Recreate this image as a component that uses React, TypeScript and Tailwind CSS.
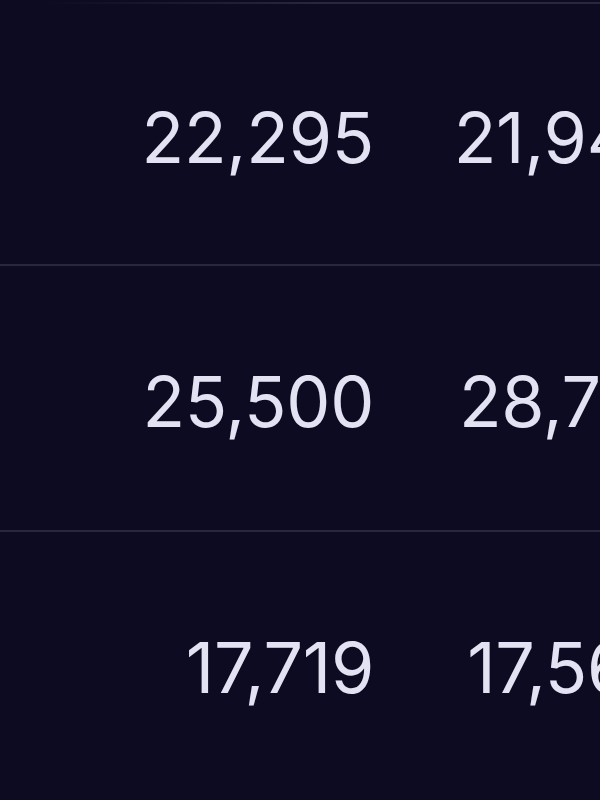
import React from 'react';

const rows = [
  { a: '22,295', b: '21,942' },
  { a: '25,500', b: '28,714' },
  { a: '17,719', b: '17,560' },
];

const App = () => {
  return (
    <div
      className="w-[600px] h-[800px] overflow-hidden bg-[#0c0b22] text-[#e3e2f3]"
      style={{ fontFamily: 'Inter, "Noto Sans", sans-serif' }}
    >
      {/* top rule, fades out toward the left */}
      <div className="pt-[2px]">
        <div className="h-[2px] ml-[40px] bg-gradient-to-r from-transparent via-[#28273f] to-[#28273f]" />
      </div>

      {rows.map((row, i) => (
        <div key={row.a}>
          <div className={`${i === 0 ? 'h-[260px]' : 'h-[264px]'} pt-[8px] flex items-center whitespace-nowrap`}>
            <div className="w-[374px] shrink-0 text-right text-[70px] font-normal tracking-[-0.3px] leading-none">
              {row.a}
            </div>
            <div className="w-[300px] shrink-0 text-right text-[70px] font-normal tracking-[-0.3px] leading-none">
              {row.b}
            </div>
          </div>
          {i < rows.length - 1 && <div className="h-[2px] bg-[#28273f]" />}
        </div>
      ))}
    </div>
  );
};

export default App;
